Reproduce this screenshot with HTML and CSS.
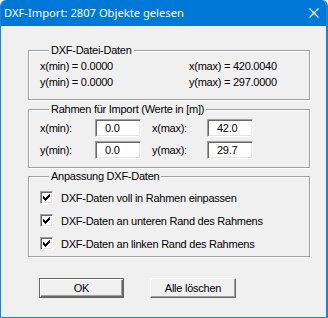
FILE: index.html
```html
<!DOCTYPE html>
<html lang="de">
<head>
    <meta charset="UTF-8">
    <title>DXF-Import</title>
    <link rel="stylesheet" href="styles.css">
</head>
<body>

    <div class="window">

        <div class="titlebar">
            <span class="title">DXF-Import: 2807 Objekte gelesen</span>
            <svg class="close" width="10" height="10" viewBox="0 0 10 10">
                <path d="M0.5 0.5 L9.5 9.5 M9.5 0.5 L0.5 9.5" stroke="#fff" stroke-width="1.2"/>
            </svg>
        </div>

        <div class="client">

            <div class="group group-file">
                <div class="group-title">DXF-Datei-Daten</div>
                <div class="data-grid">
                    <span>x(min) = 0.0000</span>
                    <span>x(max) = 420.0040</span>
                    <span>y(min) = 0.0000</span>
                    <span>y(max) = 297.0000</span>
                </div>
            </div>

            <div class="group group-frame">
                <div class="group-title">Rahmen für Import (Werte in [m])</div>
                <div class="input-grid">
                    <label for="xmin">x(min):</label>
                    <input type="text" id="xmin" value="0.0">
                    <label for="xmax">x(max):</label>
                    <input type="text" id="xmax" value="42.0">
                    <label for="ymin">y(min):</label>
                    <input type="text" id="ymin" value="0.0">
                    <label for="ymax">y(max):</label>
                    <input type="text" id="ymax" value="29.7">
                </div>
            </div>

            <div class="group group-fit">
                <div class="group-title">Anpassung DXF-Daten</div>
                <div class="check-list">
                    <div class="check-row">
                        <span class="checkbox"><svg width="7" height="7" viewBox="0 0 7 7"><path d="M0 2h1v3H0zM1 3h1v3H1zM2 4h1v3H2zM3 3h1v3H3zM4 2h1v3H4zM5 1h1v3H5zM6 0h1v3H6z" fill="#000"/></svg></span>
                        <span>DXF-Daten voll in Rahmen einpassen</span>
                    </div>
                    <div class="check-row">
                        <span class="checkbox"><svg width="7" height="7" viewBox="0 0 7 7"><path d="M0 2h1v3H0zM1 3h1v3H1zM2 4h1v3H2zM3 3h1v3H3zM4 2h1v3H4zM5 1h1v3H5zM6 0h1v3H6z" fill="#000"/></svg></span>
                        <span>DXF-Daten an unteren Rand des Rahmens</span>
                    </div>
                    <div class="check-row">
                        <span class="checkbox"><svg width="7" height="7" viewBox="0 0 7 7"><path d="M0 2h1v3H0zM1 3h1v3H1zM2 4h1v3H2zM3 3h1v3H3zM4 2h1v3H4zM5 1h1v3H5zM6 0h1v3H6z" fill="#000"/></svg></span>
                        <span>DXF-Daten an linken Rand des Rahmens</span>
                    </div>
                </div>
            </div>

            <div class="buttons">
                <button class="btn btn-default">OK</button>
                <button class="btn">Alle löschen</button>
            </div>

        </div>
    </div>

</body>
</html>
```

FILE: styles.css
```css
* {
    box-sizing: border-box;
}
body {
    margin: 0;
    font-family: "Liberation Sans", Arial, sans-serif;
    font-size: 11px;
    letter-spacing: -0.25px;
    line-height: 14px;
    color: #000;
    background: #fff;
}
.window {
    width: 328px;
    height: 318px;
    background: #f0f0f0;
    border: 1px solid #1883d7;
    border-top: none;
    border-right-width: 2px;
    border-radius: 6px 6px 0 0;
    overflow: hidden;
}
.titlebar {
    height: 26px;
    background: #0078d7;
    color: #fff;
    display: flex;
    align-items: center;
    justify-content: space-between;
    padding: 0 9px 0 4px;
    margin-left: -1px;
    margin-right: -2px;
}
.title {
    font-family: "Noto Sans", sans-serif;
    font-size: 11.2px;
    letter-spacing: 0;
}
.client {
    padding: 24px 0 0 27px;
}
.group {
    width: 282px;
    border: 1px solid #a0a0a0;
    box-shadow: inset 1px 1px 0 #fff, 1px 1px 0 #fff;
}
.group-title {
    display: block;
    width: fit-content;
    margin: -8px 0 0 9px;
    padding: 0 2px;
    line-height: 14px;
    background: #f0f0f0;
}
.group-file {
    padding: 0 0 9px 11px;
}
.data-grid {
    display: grid;
    grid-template-columns: 149px auto;
    line-height: 16px;
    margin-top: 1px;
}
.group-frame {
    margin-top: 9px;
    padding: 0 0 8px 11px;
}
.input-grid {
    display: grid;
    grid-template-columns: 55px 57px 55px 46px;
    row-gap: 4px;
    align-items: center;
    margin-top: 3px;
}
.input-grid input {
    width: 46px;
    height: 18px;
    padding: 0 0 0 9px;
    font-family: "Liberation Sans", Arial, sans-serif;
    font-size: 11px;
    letter-spacing: -0.25px;
    background: #fff;
    border-top: 1px solid #a0a0a0;
    border-left: 1px solid #a0a0a0;
    border-right: 1px solid #fff;
    border-bottom: 1px solid #fff;
    box-shadow: inset 1px 1px 0 #696969, inset -1px -1px 0 #e3e3e3;
    outline: none;
}
.group-fit {
    margin-top: 8px;
    padding: 0 0 6px 11px;
}
.check-list {
    display: flex;
    flex-direction: column;
    gap: 10px;
    margin-top: 8px;
}
.check-row {
    display: flex;
    align-items: center;
    gap: 8px;
    height: 13px;
}
.checkbox {
    width: 13px;
    height: 13px;
    display: flex;
    align-items: center;
    justify-content: center;
    background: #fff;
    border-top: 1px solid #a0a0a0;
    border-left: 1px solid #a0a0a0;
    border-right: 1px solid #fff;
    border-bottom: 1px solid #fff;
    box-shadow: inset 1px 1px 0 #696969, inset -1px -1px 0 #e3e3e3;
}
.checkbox svg {
    display: block;
}
.buttons {
    display: flex;
    gap: 26px;
    margin: 21px 0 0 11px;
}
.btn {
    width: 86px;
    height: 20px;
    padding: 0;
    font-family: "Liberation Sans", Arial, sans-serif;
    font-size: 11px;
    letter-spacing: -0.25px;
    color: #000;
    background: #f0f0f0;
    border-top: 1px solid #fff;
    border-left: 1px solid #fff;
    border-right: 1px solid #696969;
    border-bottom: 1px solid #696969;
    box-shadow: inset -1px -1px 0 #a0a0a0;
}
.btn-default {
    width: 85px;
    border: 1px solid #646464;
    box-shadow: inset 1px 1px 0 #fff, inset -1px -1px 0 #696969, inset -2px -2px 0 #a0a0a0;
}
```
